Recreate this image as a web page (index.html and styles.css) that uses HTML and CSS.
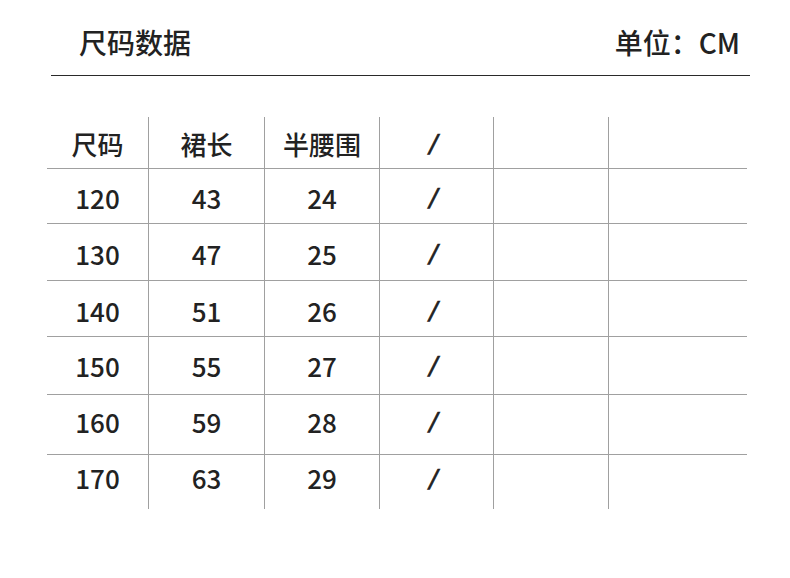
FILE: index.html
```html
<!DOCTYPE html>
<html lang="zh">
<head>
<meta charset="utf-8">
<title>尺码数据</title>
<link rel="stylesheet" href="styles.css">
</head>
<body>
<div class="page">
  <header class="head">
    <h1 class="title">尺码数据</h1>
    <div class="unit">单位：CM</div>
  </header>
  <div class="grid">
    <div class="c first">尺码</div><div class="c">裙长</div><div class="c">半腰围</div><div class="c slash">/</div><div class="c"></div><div class="c"></div>
    <div class="c first row r2">120</div><div class="c row r2">43</div><div class="c row r2">24</div><div class="c row r2 slash">/</div><div class="c row r2"></div><div class="c row r2"></div>
    <div class="c first row r3">130</div><div class="c row r3">47</div><div class="c row r3">25</div><div class="c row r3 slash">/</div><div class="c row r3"></div><div class="c row r3"></div>
    <div class="c first row r4">140</div><div class="c row r4">51</div><div class="c row r4">26</div><div class="c row r4 slash">/</div><div class="c row r4"></div><div class="c row r4"></div>
    <div class="c first row r5">150</div><div class="c row r5">55</div><div class="c row r5">27</div><div class="c row r5 slash">/</div><div class="c row r5"></div><div class="c row r5"></div>
    <div class="c first row r6">160</div><div class="c row r6">59</div><div class="c row r6">28</div><div class="c row r6 slash">/</div><div class="c row r6"></div><div class="c row r6"></div>
    <div class="c first row r7">170</div><div class="c row r7">63</div><div class="c row r7">29</div><div class="c row r7 slash">/</div><div class="c row r7"></div><div class="c row r7"></div>
  </div>
</div>
</body>
</html>
```
FILE: styles.css
```css
html, body {
  margin: 0;
  padding: 0;
  background: #ffffff;
}
body {
  width: 790px;
  height: 578px;
  overflow: hidden;
  font-family: "Noto Sans CJK SC", "Noto Sans", sans-serif;
  color: #222222;
}
.head {
  margin-left: 51px;
  width: 699px;
  height: 75px;
  border-bottom: 1px solid #2a2a2a;
  display: flex;
  align-items: center;
  justify-content: space-between;
}
.title {
  margin: 0 0 0 28px;
  font-size: 28px;
  font-weight: 500;
  line-height: 1;
  padding-top: 8px;
}
.unit {
  margin-right: 10px;
  font-size: 28px;
  font-weight: 500;
  line-height: 1;
  padding-top: 8px;
}
.grid {
  margin: 41px 0 0 47px;
  width: 700px;
  display: grid;
  grid-template-columns: 101px 116px 115px 114px 115px 139px;
  grid-template-rows: 51px 55px 57px 56px 58px 60px 55px;
}
.c {
  border-left: 1px solid #a0a0a0;
  display: flex;
  align-items: center;
  justify-content: center;
  font-size: 26px;
  font-weight: 500;
  line-height: 1;
  padding-top: 2px;
  box-sizing: border-box;
}
.c.first {
  border-left: none;
}
.c.row {
  border-top: 1px solid #a0a0a0;
}
.r2, .r3 { padding-top: 3px; }
.r4 { padding-top: 4px; }
.c.r5 { padding-top: 0; }
.c.r6 { padding-top: 0; padding-bottom: 6px; }
.c.r7 { padding-top: 0; padding-bottom: 8px; }
.slash {
  font-family: "DejaVu Sans", sans-serif;
  font-style: italic;
  font-weight: 400;
  font-size: 25px;
  padding-right: 6px;
  -webkit-text-stroke: 0.6px #222222;
}
```
